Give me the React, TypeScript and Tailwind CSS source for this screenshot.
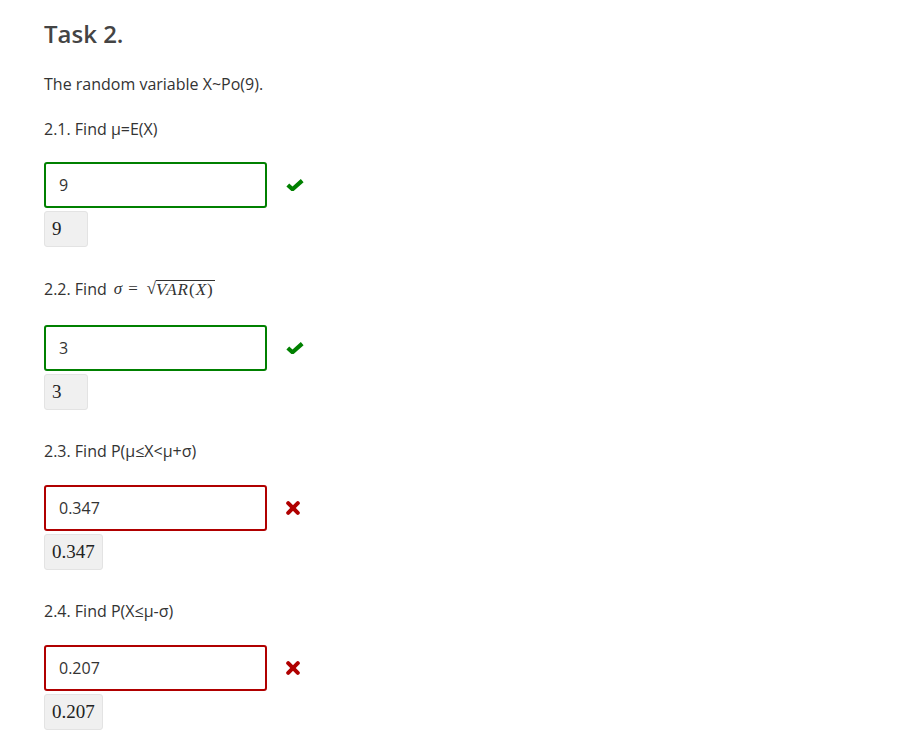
import React from "react";

function Check() {
  return (
    <svg width="18" height="12" viewBox="0 0 18 12" className="block">
      <path d="M1.8 6 L6.5 10.2 L16.2 1.6" fill="none" stroke="#008000" strokeWidth="4.2" strokeLinejoin="miter" />
    </svg>
  );
}

function Cross() {
  return (
    <svg width="14" height="14" viewBox="0 0 14 14" className="block">
      <path d="M2.2 2.2 L11.8 11.8 M11.8 2.2 L2.2 11.8" fill="none" stroke="#b00000" strokeWidth="4" strokeLinecap="round" />
    </svg>
  );
}

function Answer({ value, ok }: { value: string; ok: boolean }) {
  return (
    <div>
      <div className="flex items-center">
        <div
          className={`w-[223px] h-[46px] rounded-[3px] border-2 flex items-center pl-[13px] text-[16px] text-[#333] ${
            ok ? "border-[#008000]" : "border-[#b00000]"
          }`}
        >
          {value}
        </div>
        <div className="ml-[19px]">{ok ? <Check /> : <Cross />}</div>
      </div>
      <div className="mt-[3px] inline-flex items-center h-[36px] px-[7px] min-w-[44px] bg-[#f0f0f0] border border-[#e3e3e3] rounded-[3px] text-[19px] text-[#222] font-['Liberation_Serif',serif]">
        {value}
      </div>
    </div>
  );
}

export default function App() {
  return (
    <div className="min-h-[752px] bg-white font-['Open_Sans',sans-serif] text-[#333] pl-[44px] pt-[16px]">
      <h2 className="text-[24px] font-semibold text-[#444] leading-[36px]">Task 2.</h2>
      <p className="text-[16px] leading-[22px] mt-[21px]">The random variable X~Po(9).</p>

      <p className="text-[16px] leading-[22px] mt-[23px]">2.1. Find μ=E(X)</p>
      <div className="mt-[22px]">
        <Answer value="9" ok={true} />
      </div>

      <p className="text-[16px] leading-[22px] mt-[31px] flex items-center">
        <span>2.2. Find</span>
        <span className="ml-[7px] font-['Liberation_Serif',serif] text-[17px] flex items-center">
          <span className="italic">σ</span>
          <span className="ml-[6px]">=</span>
          <span className="ml-[9px] flex items-end">
            <span className="text-[17px] leading-[18px]">√</span>
            <span className="border-t border-[#333] leading-[17px] italic pr-[1px] tracking-[1px]">
              VAR<span className="not-italic">(</span>X<span className="not-italic">)</span>
            </span>
          </span>
        </span>
      </p>
      <div className="mt-[25px]">
        <Answer value="3" ok={true} />
      </div>

      <p className="text-[16px] leading-[22px] mt-[30px]">2.3. Find P(μ≤X&lt;μ+σ)</p>
      <div className="mt-[23px]">
        <Answer value="0.347" ok={false} />
      </div>

      <p className="text-[16px] leading-[22px] mt-[30px]">2.4. Find P(X≤μ-σ)</p>
      <div className="mt-[23px]">
        <Answer value="0.207" ok={false} />
      </div>
    </div>
  );
}
